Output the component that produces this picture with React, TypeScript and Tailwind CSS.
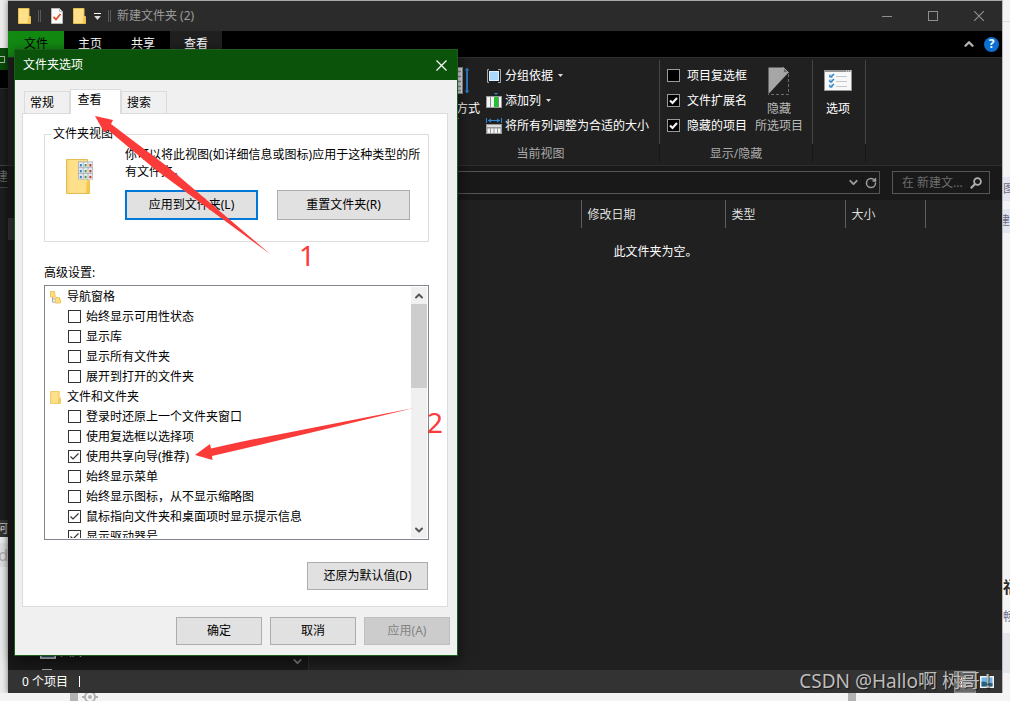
import { useState } from 'react';
import type { ReactNode } from 'react';
import { ChevronDown, ChevronUp, RotateCw } from 'lucide-react';

interface SettingItem {
  label: string;
  checked?: boolean;
}

interface SettingGroup {
  title: string;
  icon: 'tree' | 'folder';
  items: SettingItem[];
}

const settingGroups: SettingGroup[] = [
  {
    title: '导航窗格',
    icon: 'tree',
    items: [
      { label: '始终显示可用性状态' },
      { label: '显示库' },
      { label: '显示所有文件夹' },
      { label: '展开到打开的文件夹' },
    ],
  },
  {
    title: '文件和文件夹',
    icon: 'folder',
    items: [
      { label: '登录时还原上一个文件夹窗口' },
      { label: '使用复选框以选择项' },
      { label: '使用共享向导(推荐)', checked: true },
      { label: '始终显示菜单' },
      { label: '始终显示图标，从不显示缩略图' },
      { label: '鼠标指向文件夹和桌面项时显示提示信息', checked: true },
      { label: '显示驱动器号', checked: true },
    ],
  },
];

function FolderIcon({ className }: { className: string }) {
  return (
    <svg viewBox="0 0 13 16" className={className} aria-hidden="true">
      <path d="M0.5 0.5h10.5v8h1.5v7H0.5z" fill="#ffe08a" stroke="#e8bf4a" />
      <path d="M10 9.5l2-1v6.5h-2.5z" fill="#f3ca57" />
    </svg>
  );
}

function TreeIcon() {
  return (
    <svg viewBox="0 0 11 13" className="h-[13px] w-[11px]" aria-hidden="true">
      <path d="M2.5 6v5h4M2.5 8h3" fill="none" stroke="#9aa3ab" />
      <path d="M0.5 0.5h4v2h0.5v3.5h-4.5zM5.5 6.5h4v2h1v3.5h-5z" fill="#ffdc7c" stroke="#edc65c" />
    </svg>
  );
}

function TemplateFolderIcon() {
  const cells = [0, 1, 2];
  return (
    <svg viewBox="0 0 28 35" className="h-[35px] w-7 shrink-0" aria-hidden="true">
      <path d="M0.5 0.5h21v21h2v13H0.5z" fill="#ffe08a" stroke="#e3bd52" />
      <path d="M2 1v33" stroke="#f2cf6c" />
      <path d="M20.5 23l3-2v13h-3.5z" fill="#f5c84c" />
      <rect x="12" y="2.5" width="15" height="18" fill="#a5a9ad" />
      {cells.map((row) =>
        cells.map((col) => (
          <g key={`${row}-${col}`}>
            <rect x={12.8 + col * 4.8} y={3.3 + row * 5.9} width="4" height="5" fill="#eef3f8" />
            <rect
              x={13.8 + col * 4.8}
              y={5 + row * 5.9}
              width="2"
              height="2.5"
              fill={['#3b7fc4', '#5c9a50', '#c0392b'][col]}
            />
          </g>
        )),
      )}
    </svg>
  );
}

function CheckedPageIcon({ className }: { className: string }) {
  return (
    <svg viewBox="0 0 12 16" className={className} aria-hidden="true">
      <path d="M0.5 0.5h8l3 3v12h-11z" fill="#fafafa" stroke="#b9b9b9" />
      <path d="M8.5 0.5v3h3" fill="none" stroke="#b9b9b9" />
      <path d="M2.5 9l2.5 2.5 4.5-5.5" fill="none" stroke="#e0532a" strokeWidth="1.8" />
    </svg>
  );
}

function Caret({ className = 'h-[3px] w-[5px]' }: { className?: string }) {
  return (
    <svg viewBox="0 0 5 3" className={className} aria-hidden="true">
      <path d="M0 0h5L2.5 3z" fill="#dcdcdc" />
    </svg>
  );
}

function SortIcon() {
  return (
    <svg viewBox="0 0 28 28" className="h-7 w-7" aria-hidden="true">
      <rect x="2.5" y="0.5" width="18" height="26" fill="#e8eaec" stroke="#8f8f8f" />
      <path d="M4 4.5h15M4 9.5h15M4 14.5h15M4 19.5h15M4 23.5h15" stroke="#8d98a4" strokeWidth="1.5" />
      <path d="M25 2v23" stroke="#2a78c0" strokeWidth="2" />
      <path d="M22.5 3.5L25 0.5l2.5 3zM22.5 23.5l2.5 3 2.5-3z" fill="#2a78c0" />
    </svg>
  );
}

function GroupByIcon() {
  return (
    <svg viewBox="0 0 16 16" className="h-4 w-4" aria-hidden="true">
      <path d="M3 1.5H1.5v13H3M12 1.5h2.5v13H12" fill="none" stroke="#a8a8a8" />
      <rect x="3.5" y="3.5" width="9" height="9" fill="#a9d8ff" stroke="#dff0ff" />
    </svg>
  );
}

function AddColumnIcon() {
  return (
    <svg viewBox="0 0 16 16" className="h-4 w-4" aria-hidden="true">
      <path d="M8 0h4l-2 2z" fill="#2f86d1" />
      <rect x="0.5" y="3.5" width="15" height="11" fill="#f4f4f4" stroke="#9a9a9a" />
      <path d="M4.5 4v10M12.5 4v10" stroke="#8a8a8a" />
      <rect x="8" y="4" width="4" height="10" fill="#1fc42c" />
    </svg>
  );
}

function FitColumnsIcon() {
  return (
    <svg viewBox="0 0 16 16" className="h-4 w-4" aria-hidden="true">
      <path d="M0.5 0v5M15.5 0v5M2 2.5h12" stroke="#2f86d1" />
      <path d="M5 0.5l-3 2 3 2zM11 0.5l3 2-3 2z" fill="#2f86d1" />
      <rect x="0" y="6" width="16" height="10" fill="#9a9a9a" />
      <path d="M1 8h14" stroke="#dedede" strokeWidth="2" />
      <path d="M1.5 10.5h2.5V15H1.5zM5 10.5h2.5V15H5zM8.5 10.5H11V15H8.5zM12 10.5h2.5V15H12z" fill="#f6f6f6" />
    </svg>
  );
}

function HideIcon() {
  return (
    <svg viewBox="0 0 22 28" className="h-7 w-[22px]" aria-hidden="true">
      <path d="M0.5 0.5h15l5 5L0.5 27z" fill="#a6a6a6" />
      <path d="M15.5 0.5v5h5z" fill="#6b6b6b" stroke="#a0a0a0" />
      <path d="M20.5 7v20.5H0" fill="none" stroke="#6e6e6e" strokeDasharray="3 2" />
    </svg>
  );
}

function OptionsIcon() {
  return (
    <svg viewBox="0 0 28 21" className="h-[21px] w-7" aria-hidden="true">
      <rect x="0.5" y="0.5" width="27" height="20" fill="#f8f8f8" stroke="#949494" />
      <path d="M0 1h28" stroke="#949494" strokeWidth="2" />
      <path d="M22 1h1M24 1h1M26 1h1" stroke="#e8e8e8" />
      <path d="M12 6.5h11M12 11.5h11M12 16.5h11" stroke="#c3c8cc" />
      <path d="M5 4h4v4H5zM5 9h4v4H5zM5 14h4v4H5z" fill="#cfdce8" />
      <path d="M5 5.5l2 1.5 3-3M5 10.5l2 1.5 3-3M5 15.5l2 1.5 3-3" fill="none" stroke="#2b86cf" strokeWidth="1.4" />
    </svg>
  );
}

function SearchIcon() {
  return (
    <svg viewBox="0 0 12 12" className="h-3 w-3 shrink-0" aria-hidden="true">
      <circle cx="7.5" cy="4.5" r="3.4" fill="none" stroke="#b0b0b0" strokeWidth="1.8" />
      <path d="M5 7L0.8 11.2" stroke="#b0b0b0" strokeWidth="2" />
    </svg>
  );
}

function PictureIcon({ className }: { className: string }) {
  return (
    <svg viewBox="0 0 14 12" className={className} aria-hidden="true">
      <rect width="14" height="12" fill="#f4f4f4" />
      <rect x="1.5" y="1.5" width="11" height="9" fill="#6db4e8" />
      <path d="M1.5 6c3-2 5 2 11 1v3.5h-11z" fill="#2c5f7c" />
    </svg>
  );
}

function CheckBox({ label, defaultChecked, dark }: { label: string; defaultChecked?: boolean; dark?: boolean }) {
  return (
    <label className={dark ? 'flex h-[25px] items-center gap-[7px] text-white' : 'flex h-5 items-center gap-[5px]'}>
      <span className={dark ? 'grid h-[13px] w-[13px] shrink-0' : 'grid h-[14px] w-[13px] shrink-0'}>
        <input
          type="checkbox"
          defaultChecked={defaultChecked}
          className={
            dark
              ? 'peer col-start-1 row-start-1 h-[13px] w-[13px] appearance-none border border-[#9a9a9a] bg-black'
              : 'peer col-start-1 row-start-1 h-[13px] w-[13px] appearance-none border border-[#333333] bg-white'
          }
        />
        <svg
          viewBox="0 0 13 13"
          className="pointer-events-none invisible col-start-1 row-start-1 h-[13px] w-[13px] peer-checked:visible"
          aria-hidden="true"
        >
          <path
            d={dark ? 'M3 6.5l2.5 2.5L10 4' : 'M2.5 6.5l2.5 2.5 5.5-5.5'}
            fill="none"
            stroke={dark ? '#f2f2f2' : '#333333'}
            strokeWidth={dark ? 2.2 : 1.2}
          />
        </svg>
      </span>
      <span className="whitespace-nowrap">{label}</span>
    </label>
  );
}

function TitleBar() {
  return (
    <header className="flex h-[30px] items-center bg-[#2b2b2b] pl-2.5 text-[#9b9b9b]">
      <FolderIcon className="h-4 w-[13px]" />
      <span className="ml-[7px] h-3 w-[3px] border-x border-[#5a5a5a]" />
      <CheckedPageIcon className="ml-2.5 h-4 w-3" />
      <FolderIcon className="ml-2.5 h-4 w-[13px]" />
      <button type="button" aria-label="自定义快速访问工具栏" className="ml-2 flex flex-col items-center gap-[2px]">
        <span className="h-px w-[7px] bg-white" />
        <Caret className="h-1 w-[7px]" />
      </button>
      <span className="ml-[7px] h-3 w-[3px] border-x border-[#5a5a5a]" />
      <h1 className="ml-1.5">新建文件夹 (2)</h1>
      <div className="ml-auto flex">
        <button type="button" aria-label="最小化" className="grid w-[46px] place-items-center">
          <svg viewBox="0 0 10 10" className="h-2.5 w-2.5">
            <path d="M0 5.5h10" stroke="#8f8f8f" />
          </svg>
        </button>
        <button type="button" aria-label="最大化" className="grid w-[46px] place-items-center">
          <svg viewBox="0 0 10 10" className="h-2.5 w-2.5">
            <rect x="0.5" y="0.5" width="9" height="9" fill="none" stroke="#8f8f8f" />
          </svg>
        </button>
        <button type="button" aria-label="关闭" className="grid w-[46px] place-items-center">
          <svg viewBox="0 0 10 10" className="h-2.5 w-2.5">
            <path d="M0 0l10 10M10 0L0 10" stroke="#8f8f8f" strokeWidth="1.2" />
          </svg>
        </button>
      </div>
    </header>
  );
}

function RibbonTabs() {
  return (
    <nav className="flex h-[26px] bg-black text-white">
      <button type="button" className="w-14 bg-[#128a12] text-black">
        文件
      </button>
      <button type="button" className="w-[52px]">
        主页
      </button>
      <button type="button" className="w-[54px]">
        共享
      </button>
      <button type="button" className="w-[52px] bg-[#202020]">
        查看
      </button>
      <div className="ml-auto flex items-center gap-2 pr-[3px]">
        <button type="button" aria-label="最小化功能区">
          <ChevronUp size={14} strokeWidth={4} color="#b5b5b5" />
        </button>
        <button
          type="button"
          aria-label="帮助"
          className="grid h-[15px] w-[15px] place-items-center rounded-full bg-[#0a6fd0] text-xs font-bold leading-none text-white"
        >
          ?
        </button>
      </div>
    </nav>
  );
}

function RibbonGroup({ caption, className, children }: { caption?: string; className: string; children: ReactNode }) {
  return (
    <section className={`flex shrink-0 flex-col ${className}`}>
      <div className="flex h-[84px] border-r border-[#454545] pt-[3px]">{children}</div>
      <p className="h-[18px] border-r border-[#171717] text-center leading-5 text-[#a9a9a9]">{caption}</p>
    </section>
  );
}

function Ribbon() {
  return (
    <div className="flex h-[108px] border-t border-[#2e2e2e] bg-[#202020] pt-[2px] pl-[414px]">
      <RibbonGroup caption="当前视图" className="w-[238px]">
        <button type="button" className="ml-[10px] flex w-12 flex-col items-center pt-1 text-white">
          <SortIcon />
          <span className="mt-1.5 whitespace-nowrap">排序方式</span>
          <Caret className="mt-px h-[3px] w-[5px] shrink-0" />
        </button>
        <div className="ml-1.5 flex flex-col text-white">
          <button type="button" className="flex h-[25px] items-center gap-[3px]">
            <GroupByIcon />
            分组依据
            <Caret className="ml-0.5 h-[3px] w-[5px]" />
          </button>
          <button type="button" className="flex h-[25px] items-center gap-[3px]">
            <AddColumnIcon />
            添加列
            <Caret className="ml-0.5 h-[3px] w-[5px]" />
          </button>
          <button type="button" className="flex h-[25px] items-center gap-[3px] whitespace-nowrap">
            <FitColumnsIcon />
            将所有列调整为合适的大小
          </button>
        </div>
      </RibbonGroup>
      <RibbonGroup caption="显示/隐藏" className="w-[153px]">
        <div className="flex flex-col pl-[7px]">
          <CheckBox dark label="项目复选框" />
          <CheckBox dark label="文件扩展名" defaultChecked />
          <CheckBox dark label="隐藏的项目" defaultChecked />
        </div>
        <button type="button" className="ml-2 flex w-12 flex-col items-center pt-1 leading-[17px] text-[#b9b9b9]">
          <HideIcon />
          <span className="mt-[5px]">隐藏</span>
          <span className="whitespace-nowrap">所选项目</span>
        </button>
      </RibbonGroup>
      <RibbonGroup className="w-[53px]">
        <button type="button" className="flex w-[50px] flex-col items-center pt-[7px] text-white">
          <OptionsIcon />
          <span className="mt-2.5">选项</span>
        </button>
      </RibbonGroup>
    </div>
  );
}

function AddressRow() {
  return (
    <div className="flex h-[35px] gap-3 border-t border-[#2e2e2e] bg-[#191919] pt-[5px] pr-3 pl-2">
      <div className="flex h-[23px] flex-1 items-center justify-end border border-[#555555]">
        <button type="button" aria-label="以前的位置" className="px-0.5">
          <ChevronDown size={13} strokeWidth={3.5} color="#9c9c9c" />
        </button>
        <button type="button" aria-label="刷新" className="border-l border-[#111111] px-0.5">
          <RotateCw size={12} strokeWidth={3} color="#9c9c9c" />
        </button>
      </div>
      <label className="flex h-[23px] w-[98px] items-center border border-[#555555] pr-[7px] pl-[9px]">
        <input
          type="text"
          aria-label="搜索"
          placeholder="在 新建文..."
          className="w-[68px] bg-transparent text-white outline-none placeholder:text-[#6d6d6d]"
        />
        <SearchIcon />
      </label>
    </div>
  );
}

function NavPane() {
  return (
    <aside className="flex w-[301px] shrink-0 flex-col overflow-hidden border-r border-[#2b2b2b] bg-[#191919] text-white">
      <div className="mt-[18px] h-[22px] bg-[#333333]" />
      <div className="mt-auto flex items-end">
        <ul className="flex-1 pl-8">
          <li className="flex h-6 items-center gap-1">
            <PictureIcon className="h-[14px] w-4" />
            图片
          </li>
          <li className="flex h-1.5 items-end pl-0.5">
            <span className="h-px w-2.5 bg-[#a5a5a5]" />
          </li>
        </ul>
        <ChevronDown size={13} strokeWidth={3.5} color="#7d7d7d" className="mr-1 mb-0.5" />
      </div>
    </aside>
  );
}

function FileList() {
  return (
    <main className="min-w-0 flex-1 bg-[#202020] text-[#dedede]">
      <table className="table-fixed border-collapse text-left">
        <thead>
          <tr className="h-7">
            <th scope="col" aria-label="名称" className="w-[272px] border-r border-[#5e5e5e]" />
            <th scope="col" className="w-36 border-r border-[#5e5e5e] px-1.5 pt-0.5 font-normal">
              修改日期
            </th>
            <th scope="col" className="w-[120px] border-r border-[#5e5e5e] px-1.5 pt-0.5 font-normal">
              类型
            </th>
            <th scope="col" className="w-20 border-r border-[#5e5e5e] px-1.5 pt-0.5 font-normal">
              大小
            </th>
          </tr>
        </thead>
      </table>
      <p className="mt-4 text-center text-white">此文件夹为空。</p>
    </main>
  );
}

function StatusBar() {
  return (
    <footer className="flex h-[23px] items-center bg-[#333333] pr-2 pl-3.5 text-white">
      <span>0 个项目</span>
      <span className="ml-[11px] h-[11px] w-px bg-white" />
      <div className="ml-auto flex items-center gap-1">
        <button
          type="button"
          aria-label="详细信息"
          className="grid h-[22px] w-[22px] place-items-center border border-[#8a8a8a] bg-[#6a6a6a]"
        >
          <svg viewBox="0 0 14 12" className="h-3 w-3.5">
            <rect width="14" height="12" fill="#8e8e8e" />
            <path d="M1 2.5h3M1 6.5h3M1 10h3" stroke="#ffffff" strokeWidth="2" />
            <path d="M2 2.5h1M2 6.5h1M2 10h1" stroke="#c0392b" />
            <path d="M5 2.5h8M5 6.5h8M5 10h8" stroke="#d8d8d8" />
          </svg>
        </button>
        <button type="button" aria-label="大缩略图">
          <PictureIcon className="h-3 w-3.5" />
        </button>
      </div>
    </footer>
  );
}

function ExplorerWindow() {
  return (
    <div className="flex min-w-0 flex-1 flex-col border-t border-[#a7aaa7] shadow-[0_0_6px_#00000080]">
      <TitleBar />
      <RibbonTabs />
      <Ribbon />
      <AddressRow />
      <div className="flex flex-1">
        <NavPane />
        <FileList />
      </div>
      <StatusBar />
    </div>
  );
}

const pushButton = 'border border-[#adadad] bg-[#e1e1e1] text-black';

function AdvancedSettings() {
  return (
    <div className="mt-1 flex h-[255px] border border-[#82858e] p-px">
      <ul className="flex-1 overflow-hidden">
        {settingGroups.map((group) => (
          <li key={group.title}>
            <div className="flex h-5 items-center gap-1.5 pl-1">
              {group.icon === 'tree' ? <TreeIcon /> : <FolderIcon className="h-[13px] w-[11px]" />}
              {group.title}
            </div>
            <ul className="pl-[22px]">
              {group.items.map((item) => (
                <li key={item.label}>
                  <CheckBox label={item.label} defaultChecked={item.checked} />
                </li>
              ))}
            </ul>
          </li>
        ))}
      </ul>
      <div className="flex w-4 flex-col items-center bg-[#f0f0f0]">
        <button type="button" aria-label="向上滚动" className="grid h-[17px] place-items-center">
          <ChevronUp size={12} strokeWidth={4} color="#555555" />
        </button>
        <div className="h-[84px] w-full bg-[#cdcdcd]" />
        <button type="button" aria-label="向下滚动" className="mt-auto grid h-[17px] place-items-center">
          <ChevronDown size={12} strokeWidth={4} color="#555555" />
        </button>
      </div>
    </div>
  );
}

const dialogTabs = ['常规', '查看', '搜索'];

function FolderOptionsDialog() {
  const [active, setActive] = useState('查看');

  return (
    <div
      role="dialog"
      aria-label="文件夹选项"
      className="absolute top-[49px] left-3.5 w-[444px] border border-[#1c5f1c] bg-[#f0f0f0] text-black shadow-[0_4px_14px_#000000a0]"
    >
      <div className="flex h-[30px] items-center justify-between bg-[#0b520b] pr-2.5 pl-2 text-white">
        <h2>文件夹选项</h2>
        <button type="button" aria-label="关闭">
          <svg viewBox="0 0 11 11" className="h-[11px] w-[11px]">
            <path d="M0.5 0.5l10 10M10.5 0.5l-10 10" stroke="#ffffff" strokeWidth="1.2" />
          </svg>
        </button>
      </div>

      <div role="tablist" className="flex h-[33px] items-end pl-[9px]">
        {dialogTabs.map((tab) => (
          <button
            key={tab}
            type="button"
            role="tab"
            aria-selected={active === tab}
            onClick={() => setActive(tab)}
            className={
              active === tab
                ? 'z-10 -mb-px h-[25px] w-[51px] border border-b-0 border-[#dcdcdc] bg-white pr-3 pb-1'
                : 'h-[22px] w-[46px] border border-b-0 border-[#dcdcdc] bg-[#f0f0f0] pr-2.5'
            }
          >
            {tab}
          </button>
        ))}
      </div>

      <div role="tabpanel" className="mr-[9px] ml-[7px] border border-[#dcdcdc] bg-white pt-3 pr-[18px] pb-4 pl-[21px]">
        <fieldset className="h-[116px] border border-[#dcdcdc]">
          <legend className="ml-1.5 px-0.5 leading-4">文件夹视图</legend>
          <div className="flex gap-[31px] pr-[3px] pl-[21px]">
            <div className="pt-[17px]">
              <TemplateFolderIcon />
            </div>
            <div className="pt-1">
              <p className="leading-[17px]">你可以将此视图(如详细信息或图标)应用于这种类型的所有文件夹。</p>
              <div className="mt-[10px] flex gap-[19px]">
                <button type="button" className="h-[30px] w-[133px] border-2 border-[#0078d7] bg-[#e1e1e1] text-black">
                  应用到文件夹(L)
                </button>
                <button type="button" className={`h-[30px] w-[133px] ${pushButton}`}>
                  重置文件夹(R)
                </button>
              </div>
            </div>
          </div>
        </fieldset>

        <p className="mt-[23px] leading-4">高级设置:</p>
        <AdvancedSettings />

        <div className="mt-[22px] flex justify-end pr-px">
          <button type="button" className={`h-7 w-[121px] ${pushButton}`}>
            还原为默认值(D)
          </button>
        </div>
      </div>

      <div className="flex justify-end gap-2 pt-2.5 pr-[7px] pb-2.5">
        <button type="button" className={`h-7 w-[86px] ${pushButton}`}>
          确定
        </button>
        <button type="button" className={`h-7 w-[86px] ${pushButton}`}>
          取消
        </button>
        <button type="button" disabled className="h-7 w-[86px] border border-[#bfbfbf] bg-[#cccccc] text-[#838383]">
          应用(A)
        </button>
      </div>
    </div>
  );
}

// red arrows and step numbers drawn over both windows
function Annotations() {
  return (
    <div className="pointer-events-none absolute inset-0 overflow-hidden text-[28px] leading-7 text-[#fb3b3a]">
      <svg width="460" height="480" viewBox="0 0 460 480" aria-hidden="true">
        <path d="M95 116L113 120L111 124L168 167L270 254L156 170L108 130L104 132z" fill="#fb3b3a" />
        <path d="M195 455L210 444L211 448.5L240 442L414 408L240 449.5L212 456L212.5 460z" fill="#fb3b3a" />
      </svg>
      <span className="absolute top-[241px] left-[299px]">1</span>
      <span className="absolute top-[408px] left-[427px]">2</span>
    </div>
  );
}

function LeftBackdrop() {
  return (
    <div className="flex w-2 shrink-0 flex-col overflow-hidden bg-[#ececec]">
      <div className="mt-12 flex h-[22px] items-center bg-[#0b4d0b]">
        <span className="h-[7px] w-[5px] border border-l-0 border-[#a9c4a9]" />
      </div>
      <div className="h-[18px] bg-black" />
      <div className="h-[77px] border-t border-[#2e2e2e] bg-[#1f1f1f]" />
      <p className="flex h-[23px] items-center justify-end border-y border-[#444444] bg-[#191919] text-[#6d6d6d]">建</p>
      <div className="h-[332px] bg-[#1f1f1f]" />
      <p className="flex h-[17px] items-center justify-end bg-[#333333] text-[#c8c8c8]">阿</p>
      <p className="mt-1.5 flex h-6 items-center justify-end bg-[#e0e0e0] text-base text-[#b5aaa8]">d</p>
    </div>
  );
}

function RightBackdrop() {
  return (
    <div className="flex w-2 shrink-0 flex-col overflow-hidden border-l border-[#b9b9b9] bg-[#f4f4f6] text-[#6c6c8c]">
      <div className="h-[22px] border-b border-[#dddddd]" />
      <p className="mt-[155px] flex h-6 items-center bg-[#e3e6ee]">图</p>
      <p className="mt-2 flex h-6 items-center justify-end bg-[#e3e6ee]">建</p>
      <p className="mt-[342px] flex text-base font-bold text-[#2a2a2a]">福</p>
      <p className="mt-2.5 flex">畅</p>
      <div className="mt-2 h-10 bg-[#e6e6ea]" />
    </div>
  );
}

export default function App() {
  return (
    <div className="relative flex min-h-screen flex-col overflow-hidden bg-[#f4f4f4] font-['Noto_Sans','Noto_Sans_CJK_SC',sans-serif] text-xs">
      <div className="flex flex-1">
        <LeftBackdrop />
        <ExplorerWindow />
        <RightBackdrop />
      </div>
      <div className="flex h-2 items-start justify-between overflow-hidden bg-[#f4f4f4] pr-[154px] pl-[70px]">
        <div className="flex gap-1">
          <span className="h-2 w-2 bg-[#b3b3b3]" />
          <svg viewBox="0 0 16 16" className="h-4 w-4 -translate-y-1" aria-hidden="true">
            <circle cx="8" cy="8" r="5" fill="none" stroke="#b0b0b0" strokeWidth="2" />
            <circle cx="8" cy="8" r="2" fill="#b0b0b0" />
            <path d="M0 8h3M13 8h3" stroke="#b0b0b0" strokeWidth="2" />
          </svg>
        </div>
        <span className="h-2 w-2 bg-[#b3b3b3]" />
      </div>
      <FolderOptionsDialog />
      <Annotations />
      <p className="absolute right-5 bottom-1.5 text-[19px] leading-7 whitespace-nowrap text-[#bdbdbd] [text-shadow:1px_1px_1px_#000000a0]">
        CSDN @Hallo啊 树哥 !
      </p>
    </div>
  );
}
